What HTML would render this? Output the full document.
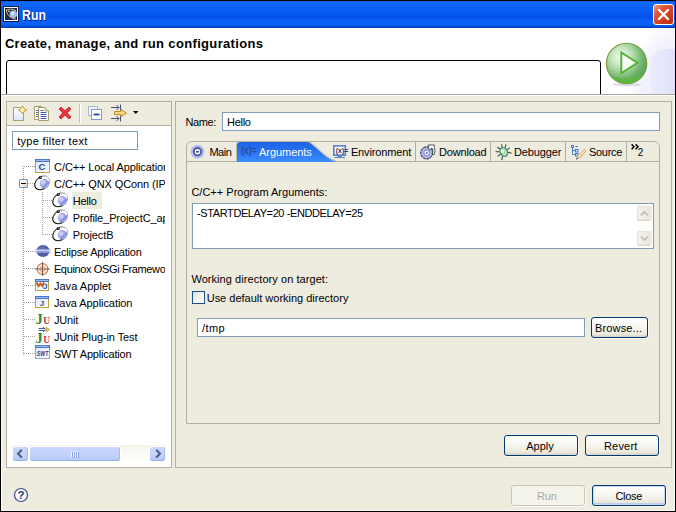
<!DOCTYPE html>
<html><head><meta charset="utf-8"><title>Run</title>
<style>
html,body{margin:0;padding:0;}
body{width:676px;height:512px;overflow:hidden;background:#eeebdf;position:relative;font-family:"Liberation Sans",sans-serif;font-size:11px;color:#000;}
.a{position:absolute;}
.t{position:absolute;white-space:nowrap;line-height:16px;height:16px;display:block;}
.fld{position:absolute;background:#fff;border:1px solid #7f9db9;box-sizing:border-box;}
.btn{position:absolute;box-sizing:border-box;box-shadow:1px 1px 0 rgba(255,255,255,0.7);border:1px solid #003c74;border-radius:3px;background:linear-gradient(to bottom,#ffffff 0%,#f6f5ef 50%,#ece9dc 85%,#d6d0c5 100%);}
.grp{position:absolute;box-sizing:border-box;border:1px solid #b4b09f;}
svg{position:absolute;overflow:visible;}
</style></head><body>
<!-- window frame -->
<div class="a" style="left:0;top:0;width:676px;height:512px;background:#000;"></div>
<div class="a" style="left:1px;top:28px;width:674px;height:483px;background:#eeebdf;box-sizing:border-box;border-left:1px solid #fbfaf4;border-right:1px solid #fbfaf4;border-bottom:1px solid #fbfaf4;"></div>
<!-- title bar -->
<div class="a" style="left:1px;top:1px;width:674px;height:27px;background:linear-gradient(to bottom,#0a54e2 0%,#146afa 5%,#1066f8 14%,#0a5ef4 32%,#0454ec 55%,#0350ea 62%,#085ef5 70%,#0a60f7 86%,#0756e8 92%,#0446ca 97%,#0336a2 100%);"></div>
<!--TITLEICON:BEGIN-->
<svg style="left:3px;top:6px" width="16" height="16" viewBox="0 0 16 16"><rect x="0.500" y="0.500" width="15" height="15" fill="#ffffff" stroke="#0c1c4c" stroke-width="1"/><rect x="2" y="2" width="12" height="12" fill="#15265c"/><circle cx="10.300" cy="8.300" r="3.700" fill="#a4bfe0"/><circle cx="9.600" cy="7.400" r="1.800" fill="#d4e2f2"/><path d="M3.500 3.500 C3 8 7 12.500 13 13 M4 4 C7 2.500 11 3 13 5" fill="none" stroke="#e6c85a" stroke-width="1"/><circle cx="6" cy="5.300" r="0.800" fill="#fff"/></svg>
<!--TITLEICON:END-->
<!-- close button -->
<div class="a" style="left:653px;top:4px;width:21px;height:21px;box-sizing:border-box;border:1px solid #fff;border-radius:3px;background:linear-gradient(135deg,#eb9a80 0%,#e0583a 30%,#cc3c1c 70%,#b83010 100%);"></div>
<svg style="left:653px;top:4px" width="21" height="21" viewBox="0 0 21 21"><path d="M6 6 L15 15 M15 6 L6 15" stroke="#fff" stroke-width="2.400" stroke-linecap="round" fill="none"/></svg>
<!-- header -->
<div class="a" style="left:1px;top:28px;width:674px;height:66px;background:#fff;overflow:hidden;">
  <div class="a" style="left:610px;top:0;width:64px;height:66px;background:radial-gradient(ellipse 46px 72px at 64px 66px,#eeeffc 0%,#f1f2fd 70%,#f8f8fe 88%,#ffffff 100%);"></div>
  <div class="a" style="left:650px;top:21px;width:24px;height:45px;border-top-left-radius:16px 14px;background:linear-gradient(to right,#eaebfc 0%,#e4e6fb 60%,#dee1fa 100%);"></div>
  <div class="a" style="left:5px;top:32px;width:595px;height:50px;box-sizing:border-box;border:1px solid #000;border-radius:3px;background:#fff;"></div>
</div>
<!--PLAY:BEGIN-->
<svg style="left:604px;top:41px" width="46" height="46" viewBox="0 0 46 46">
<defs>
<radialGradient id="pg" cx="0.36" cy="0.34" r="0.72"><stop offset="0" stop-color="#f2faee"/><stop offset="0.28" stop-color="#cfe9c6"/><stop offset="0.5" stop-color="#a3d39a"/><stop offset="0.75" stop-color="#6eb26c"/><stop offset="1" stop-color="#559f55"/></radialGradient>
<linearGradient id="tgw" x1="0" y1="0" x2="1" y2="1"><stop offset="0" stop-color="#ffffff"/><stop offset="1" stop-color="#eaf6e4"/></linearGradient>
</defs>
<ellipse cx="23" cy="43.600" rx="15" ry="1.600" fill="#d4d4e6" opacity="0.800"/>
<circle cx="22.600" cy="22.500" r="20.200" fill="url(#pg)" stroke="#76983e" stroke-width="1.100"/>
<path d="M5.500 33 A20 20 0 0 0 39.700 33 A22 13 0 0 1 5.500 33Z" fill="#5cb83c" opacity="0.900"/>
<path d="M17.300 11.500 L33.500 21.700 L17.300 32.300 Z" fill="url(#tgw)" stroke="#4fb033" stroke-width="1.900" stroke-linejoin="miter"/>
</svg>
<!--PLAY:END-->
<div class="a" style="left:1px;top:94px;width:674px;height:1px;background:#aca899;"></div>
<div class="a" style="left:1px;top:95px;width:674px;height:1px;background:#fff;"></div>

<!-- left panel -->
<div class="grp" style="left:6px;top:101px;width:166px;height:367px;background:#fff;"></div>
<div class="a" style="left:7px;top:102px;width:164px;height:23px;background:#eeebdf;"></div>
<div class="a" style="left:7px;top:125px;width:164px;height:1px;background:#b4b09f;"></div>
<!--TOOLBAR:BEGIN-->
<!-- new -->
<svg style="left:13px;top:105px" width="16" height="16" viewBox="0 0 16 16"><defs><linearGradient id="pgd" x1="0" y1="0" x2="0" y2="1"><stop offset="0" stop-color="#ffffff"/><stop offset="1" stop-color="#dfe6fb"/></linearGradient></defs><path d="M0.5 2.5 L7 2.5 L10.5 6 L10.5 15.5 L0.5 15.5 Z" fill="url(#pgd)" stroke="#a79d6a" stroke-width="1"/><path d="M9.5 1 L11 3.5 L13.5 5 L11 6.5 L9.5 9 L8 6.5 L5.5 5 L8 3.5 Z" fill="#fff7c8" stroke="#c49a1a" stroke-width="1"/></svg>
<!-- copy -->
<svg style="left:34px;top:105px" width="16" height="16" viewBox="0 0 16 16"><path d="M0.5 1.5 L7.5 1.5 L7.5 14.5 L0.5 14.5 Z" fill="#fff" stroke="#a79d6a"/><path d="M2 5.500h3M2 7.500h3M2 9.500h3M2 11.500h3" stroke="#4a6fc0" stroke-width="1"/><path d="M4.5 2.500 L11 2.5 L14.5 6 L14.5 15.500 L4.500 15.500 Z" fill="#fff" stroke="#a79d6a"/><path d="M11 2.5 L11 6 L14.5 6" fill="#f1d9a0" stroke="#a79d6a" stroke-width="0.8"/><path d="M6.500 5.500h3M6.500 7.500h6M6.500 9.500h6M6.500 11.500h6M6.500 13.500h6" stroke="#3b5fb5" stroke-width="1"/></svg>
<!-- delete -->
<svg style="left:58px;top:106px" width="14" height="14" viewBox="0 0 14 14"><path d="M1 3 L3 1 L7 4.8 L11 1 L13 3 L9.200 7 L13 11 L11 13 L7 9.200 L3 13 L1 11 L4.800 7 Z" fill="#e8343a" stroke="#c51f2a" stroke-width="0.8" stroke-linejoin="round"/></svg>
<div class="a" style="left:79px;top:104px;width:1px;height:19px;background:#c5c2b2;"></div>
<div class="a" style="left:80px;top:104px;width:1px;height:19px;background:#fff;"></div>
<!-- collapse all -->
<svg style="left:88px;top:106px" width="14" height="14" viewBox="0 0 14 14"><rect x="0.500" y="0.500" width="9" height="9" fill="#f4f6fb" stroke="#a9b8d8"/><rect x="3.500" y="3.500" width="10" height="10" fill="#fff" stroke="#7f9bd6" stroke-width="1"/><rect x="5.500" y="7.600" width="6" height="1.800" fill="#2a4c9c"/></svg>
<!-- filter -->
<svg style="left:110px;top:104px" width="18" height="18" viewBox="0 0 18 18"><path d="M1 3.500 H9 M6.500 1 L9 3.500 L6.500 6 M10.500 0.500 V6.500" stroke="#44507a" stroke-width="1" fill="none"/><path d="M1 14.500 H9 M6.500 12 L9 14.500 L6.500 17 M10.500 11.500 V17.500" stroke="#44507a" stroke-width="1" fill="none"/><path d="M4.500 7.500 H11 V5.500 L16.500 9 L11 12.500 V10.500 H4.500 Z" fill="#f8d98a" stroke="#c08a1e" stroke-width="1" stroke-linejoin="round"/></svg>
<svg style="left:133px;top:111px" width="6" height="4" viewBox="0 0 6 4"><path d="M0 0 H5.500 L2.750 3 Z" fill="#000"/></svg>
<!--TOOLBAR:END-->
<div class="fld" style="left:12px;top:131px;width:126px;height:19px;"></div>
<!--TREE:BEGIN-->
<div class="a" style="left:12px;top:156px;width:154px;height:292px;overflow:hidden;">
<div class="a" style="left:-12px;top:-156px;width:200px;height:500px;">
<div class="a" style="left:72px;top:192px;width:30px;height:17px;background:#eeebdf;"></div>
<svg style="left:23px;top:166px" width="1" height="189" viewBox="0 0 1 189"><path d="M0.5 0 V189" stroke="#a9a797" stroke-width="1" stroke-dasharray="1 1" shape-rendering="crispEdges"/></svg>
<svg style="left:24px;top:166px" width="11" height="1" viewBox="0 0 11 1"><path d="M0 0.5 H11" stroke="#a9a797" stroke-width="1" stroke-dasharray="1 1" shape-rendering="crispEdges"/></svg>
<svg style="left:28px;top:183px" width="7" height="1" viewBox="0 0 7 1"><path d="M0 0.5 H7" stroke="#a9a797" stroke-width="1" stroke-dasharray="1 1" shape-rendering="crispEdges"/></svg>
<svg style="left:24px;top:251px" width="11" height="1" viewBox="0 0 11 1"><path d="M0 0.5 H11" stroke="#a9a797" stroke-width="1" stroke-dasharray="1 1" shape-rendering="crispEdges"/></svg>
<svg style="left:24px;top:268px" width="11" height="1" viewBox="0 0 11 1"><path d="M0 0.5 H11" stroke="#a9a797" stroke-width="1" stroke-dasharray="1 1" shape-rendering="crispEdges"/></svg>
<svg style="left:24px;top:285px" width="11" height="1" viewBox="0 0 11 1"><path d="M0 0.5 H11" stroke="#a9a797" stroke-width="1" stroke-dasharray="1 1" shape-rendering="crispEdges"/></svg>
<svg style="left:24px;top:302px" width="11" height="1" viewBox="0 0 11 1"><path d="M0 0.5 H11" stroke="#a9a797" stroke-width="1" stroke-dasharray="1 1" shape-rendering="crispEdges"/></svg>
<svg style="left:24px;top:319px" width="11" height="1" viewBox="0 0 11 1"><path d="M0 0.5 H11" stroke="#a9a797" stroke-width="1" stroke-dasharray="1 1" shape-rendering="crispEdges"/></svg>
<svg style="left:24px;top:336px" width="11" height="1" viewBox="0 0 11 1"><path d="M0 0.5 H11" stroke="#a9a797" stroke-width="1" stroke-dasharray="1 1" shape-rendering="crispEdges"/></svg>
<svg style="left:24px;top:353px" width="11" height="1" viewBox="0 0 11 1"><path d="M0 0.5 H11" stroke="#a9a797" stroke-width="1" stroke-dasharray="1 1" shape-rendering="crispEdges"/></svg>
<svg style="left:42px;top:192px" width="1" height="44" viewBox="0 0 1 44"><path d="M0.5 0 V44" stroke="#a9a797" stroke-width="1" stroke-dasharray="1 1" shape-rendering="crispEdges"/></svg>
<svg style="left:43px;top:200px" width="10" height="1" viewBox="0 0 10 1"><path d="M0 0.5 H10" stroke="#a9a797" stroke-width="1" stroke-dasharray="1 1" shape-rendering="crispEdges"/></svg>
<svg style="left:43px;top:217px" width="10" height="1" viewBox="0 0 10 1"><path d="M0 0.5 H10" stroke="#a9a797" stroke-width="1" stroke-dasharray="1 1" shape-rendering="crispEdges"/></svg>
<svg style="left:43px;top:234px" width="10" height="1" viewBox="0 0 10 1"><path d="M0 0.5 H10" stroke="#a9a797" stroke-width="1" stroke-dasharray="1 1" shape-rendering="crispEdges"/></svg>
<div class="a" style="left:19px;top:179px;width:9px;height:9px;box-sizing:border-box;border:1px solid #7898b5;border-radius:1px;background:linear-gradient(135deg,#fff 30%,#d8d4c4 100%);"></div><div class="a" style="left:21px;top:183px;width:5px;height:1px;background:#000;"></div>
<svg style="left:35px;top:159px" width="15" height="14" viewBox="0 0 15 14"><defs><linearGradient id="wg" x1="0" y1="0" x2="1" y2="1"><stop offset="0" stop-color="#d8e8fb"/><stop offset="1" stop-color="#ffffff"/></linearGradient></defs><rect x="0.5" y="0.5" width="14" height="13" fill="url(#wg)" stroke="#c4a043"/><rect x="0" y="0" width="15" height="3" fill="#4a78c8"/><rect x="1" y="1" width="13" height="1" fill="#9fbdec"/><text x="3.6" y="11.300" font-family="Liberation Sans, sans-serif" font-weight="bold" font-size="9.500" fill="#26498c">C</text></svg>
<svg style="left:34px;top:175px" width="17" height="16" viewBox="0 0 17 16"><defs><linearGradient id="qg" x1="0" y1="0" x2="1" y2="0"><stop offset="0" stop-color="#000"/><stop offset="0.45" stop-color="#333"/><stop offset="1" stop-color="#c8c8c8"/></linearGradient></defs><ellipse cx="8.200" cy="7.800" rx="8.200" ry="6" transform="rotate(-38 8.200 7.800)" fill="#fff" stroke="url(#qg)" stroke-width="1.100"/><circle cx="10.500" cy="8.800" r="4.700" fill="#a4a8e6"/><circle cx="9.300" cy="7.600" r="2.400" fill="#c9ccf3"/><path d="M14.300 6 L7.500 12.600 L9 13.400 L15.200 8 Z" fill="#8288d6" opacity="0.700"/><circle cx="6.300" cy="2.500" r="1.600" fill="#111"/><circle cx="6.600" cy="2.300" r="0.500" fill="#fff"/></svg>
<svg style="left:52px;top:192px" width="17" height="16" viewBox="0 0 17 16"><defs><linearGradient id="qg" x1="0" y1="0" x2="1" y2="0"><stop offset="0" stop-color="#000"/><stop offset="0.45" stop-color="#333"/><stop offset="1" stop-color="#c8c8c8"/></linearGradient></defs><ellipse cx="8.200" cy="7.800" rx="8.200" ry="6" transform="rotate(-38 8.200 7.800)" fill="#fff" stroke="url(#qg)" stroke-width="1.100"/><circle cx="10.500" cy="8.800" r="4.700" fill="#a4a8e6"/><circle cx="9.300" cy="7.600" r="2.400" fill="#c9ccf3"/><path d="M14.300 6 L7.500 12.600 L9 13.400 L15.200 8 Z" fill="#8288d6" opacity="0.700"/><circle cx="6.300" cy="2.500" r="1.600" fill="#111"/><circle cx="6.600" cy="2.300" r="0.500" fill="#fff"/></svg>
<svg style="left:52px;top:209px" width="17" height="16" viewBox="0 0 17 16"><defs><linearGradient id="qg" x1="0" y1="0" x2="1" y2="0"><stop offset="0" stop-color="#000"/><stop offset="0.45" stop-color="#333"/><stop offset="1" stop-color="#c8c8c8"/></linearGradient></defs><ellipse cx="8.200" cy="7.800" rx="8.200" ry="6" transform="rotate(-38 8.200 7.800)" fill="#fff" stroke="url(#qg)" stroke-width="1.100"/><circle cx="10.500" cy="8.800" r="4.700" fill="#a4a8e6"/><circle cx="9.300" cy="7.600" r="2.400" fill="#c9ccf3"/><path d="M14.300 6 L7.500 12.600 L9 13.400 L15.200 8 Z" fill="#8288d6" opacity="0.700"/><circle cx="6.300" cy="2.500" r="1.600" fill="#111"/><circle cx="6.600" cy="2.300" r="0.500" fill="#fff"/></svg>
<svg style="left:52px;top:226px" width="17" height="16" viewBox="0 0 17 16"><defs><linearGradient id="qg" x1="0" y1="0" x2="1" y2="0"><stop offset="0" stop-color="#000"/><stop offset="0.45" stop-color="#333"/><stop offset="1" stop-color="#c8c8c8"/></linearGradient></defs><ellipse cx="8.200" cy="7.800" rx="8.200" ry="6" transform="rotate(-38 8.200 7.800)" fill="#fff" stroke="url(#qg)" stroke-width="1.100"/><circle cx="10.500" cy="8.800" r="4.700" fill="#a4a8e6"/><circle cx="9.300" cy="7.600" r="2.400" fill="#c9ccf3"/><path d="M14.300 6 L7.500 12.600 L9 13.400 L15.200 8 Z" fill="#8288d6" opacity="0.700"/><circle cx="6.300" cy="2.500" r="1.600" fill="#111"/><circle cx="6.600" cy="2.300" r="0.500" fill="#fff"/></svg>
<svg style="left:35px;top:244px" width="16" height="14" viewBox="0 0 16 14"><ellipse cx="8" cy="7" rx="6.600" ry="6" fill="#565ea4"/><ellipse cx="7" cy="4.500" rx="3.500" ry="2.200" fill="#646cb2"/><rect x="0.500" y="5" width="15" height="1" fill="#8fa8e8"/><rect x="0" y="6.200" width="16" height="1.300" fill="#dfe8ff"/><rect x="0.500" y="7.800" width="15" height="1" fill="#8fa8e8"/></svg>
<svg style="left:35px;top:262px" width="16" height="14" viewBox="0 0 16 14"><circle cx="7.500" cy="7" r="5.400" fill="#fdf0dc" stroke="#d8704a" stroke-width="1.100"/><circle cx="7.500" cy="7" r="2.600" fill="none" stroke="#e0906a" stroke-width="0.900"/><path d="M7.500 0 V14 M0 7 H15" stroke="#5a3a30" stroke-width="0.800"/></svg>
<svg style="left:35px;top:279px" width="14" height="12" viewBox="0 0 14 12"><rect x="0.500" y="0.500" width="13" height="11" fill="url(#wg)" stroke="#c4a043"/><rect x="0" y="0" width="14" height="3" fill="#4a78c8"/><rect x="1" y="1" width="12" height="1" fill="#9fbdec"/><path d="M1.500 3.500 L3.500 7 L5.500 4.500 L7.500 7 L9 3.500" stroke="#c8601a" stroke-width="2" fill="none"/><text x="8" y="10.300" font-family="Liberation Sans, sans-serif" font-weight="bold" font-size="8" fill="#2a52a0">J</text></svg>
<svg style="left:35px;top:296px" width="14" height="12" viewBox="0 0 14 12"><rect x="0.500" y="0.500" width="13" height="11" fill="url(#wg)" stroke="#c4a043"/><rect x="0" y="0" width="14" height="3" fill="#4a78c8"/><rect x="1" y="1" width="12" height="1" fill="#9fbdec"/><text x="4.800" y="10.300" font-family="Liberation Sans, sans-serif" font-weight="bold" font-size="8" fill="#2a52a0">J</text></svg>
<svg style="left:35px;top:309px" width="17" height="20" viewBox="0 0 17 20"><text x="0.500" y="15" font-family="Liberation Serif, serif" font-weight="bold" font-size="14.500" fill="#2a8a3a">J</text><text x="8.300" y="15" font-family="Liberation Serif, serif" font-weight="bold" font-size="9.500" fill="#d8303a">U</text></svg>
<svg style="left:35px;top:326px" width="17" height="20" viewBox="0 0 17 20"><text x="0.500" y="17" font-family="Liberation Serif, serif" font-weight="bold" font-size="14.500" fill="#2a8a3a">J</text><text x="8.300" y="17" font-family="Liberation Serif, serif" font-weight="bold" font-size="9.500" fill="#d8303a">U</text><path d="M3.500 2.500 H9.500 M3.500 4.500 H9.500 M8 1 L10.500 3.500 L8 6" stroke="#3b5fb5" stroke-width="1" fill="none"/><path d="M11 1.300 L14.500 3.500 L11 5.700 Z" fill="#f6d27a" stroke="#c08a1e" stroke-width="0.800"/></svg>
<svg style="left:35px;top:345px" width="15" height="14" viewBox="0 0 15 14"><rect x="0.500" y="0.500" width="14" height="13" fill="url(#wg)" stroke="#9aa6c8"/><rect x="0" y="0" width="15" height="3" fill="#4a78c8"/><rect x="1" y="1" width="13" height="1" fill="#9fbdec"/><text x="1.800" y="10.800" font-family="Liberation Sans, sans-serif" font-weight="bold" font-style="italic" font-size="6.500" fill="#1d3c8a" textLength="11.500" lengthAdjust="spacingAndGlyphs">SWT</text></svg>
</div></div>
<!--TREE:END-->
<!--HSCROLL:BEGIN-->
<!-- horizontal scrollbar -->
<div class="a" style="left:12px;top:445px;width:154px;height:17px;background:linear-gradient(to bottom,#f1f0ea 0%,#f9f8f4 25%,#fefefc 100%);"></div>
<div class="a" style="left:12px;top:446px;width:17px;height:16px;box-sizing:border-box;border:1px solid #fff;border-radius:3px;background:linear-gradient(to bottom,#cad7fb 0%,#c3d2fa 60%,#b3c5f3 100%);box-shadow:inset 0 -1px 0 #98b0e6,inset -1px 0 0 #a8bcec;"></div>
<svg style="left:16px;top:449px" width="8" height="10" viewBox="0 0 8 10"><path d="M5.800 0.800 L2 4.700 L5.800 8.600" stroke="#4d6185" stroke-width="2.100" fill="none"/></svg>
<div class="a" style="left:29px;top:446px;width:92px;height:16px;box-sizing:border-box;border:1px solid #fff;border-radius:3px;background:linear-gradient(to bottom,#cad7fb 0%,#c3d2fa 55%,#b6c8f5 100%);box-shadow:inset 0 -1px 0 #98b0e6,inset -1px 0 0 #a8bcec;"></div>
<div class="a" style="left:71px;top:451px;width:1px;height:6px;background:#eef3ff;"></div><div class="a" style="left:73px;top:451px;width:1px;height:6px;background:#eef3ff;"></div><div class="a" style="left:75px;top:451px;width:1px;height:6px;background:#eef3ff;"></div><div class="a" style="left:77px;top:451px;width:1px;height:6px;background:#eef3ff;"></div>
<div class="a" style="left:72px;top:452px;width:1px;height:6px;background:#8ca5dd;"></div><div class="a" style="left:74px;top:452px;width:1px;height:6px;background:#8ca5dd;"></div><div class="a" style="left:76px;top:452px;width:1px;height:6px;background:#8ca5dd;"></div><div class="a" style="left:78px;top:452px;width:1px;height:6px;background:#8ca5dd;"></div>
<div class="a" style="left:149px;top:446px;width:17px;height:16px;box-sizing:border-box;border:1px solid #fff;border-radius:3px;background:linear-gradient(to bottom,#cad7fb 0%,#c3d2fa 60%,#b3c5f3 100%);box-shadow:inset 0 -1px 0 #98b0e6,inset -1px 0 0 #a8bcec;"></div>
<svg style="left:154px;top:449px" width="8" height="10" viewBox="0 0 8 10"><path d="M2.200 0.800 L6 4.700 L2.200 8.600" stroke="#4d6185" stroke-width="2.100" fill="none"/></svg>
<!--HSCROLL:END-->

<!-- right panel -->
<div class="grp" style="left:175px;top:101px;width:497px;height:367px;"></div>
<div class="fld" style="left:222px;top:112px;width:438px;height:19px;"></div>
<!--TABS:BEGIN-->
<!-- tab folder -->
<div class="a" style="left:186px;top:141px;width:474px;height:283px;box-sizing:border-box;border:1px solid #b2ae9f;border-radius:6px 6px 0 0;"></div>
<div class="a" style="left:187px;top:161px;width:472px;height:1px;background:#b2ae9f;"></div>
<div class="a" style="left:415px;top:142px;width:1px;height:19px;background:#b2ae9f;"></div>
<div class="a" style="left:490px;top:142px;width:1px;height:19px;background:#b2ae9f;"></div>
<div class="a" style="left:565px;top:142px;width:1px;height:19px;background:#b2ae9f;"></div>
<div class="a" style="left:626px;top:142px;width:1px;height:19px;background:#b2ae9f;"></div>
<!-- selected tab -->
<svg style="left:236px;top:141px" width="102" height="22" viewBox="0 0 102 22">
<defs><linearGradient id="tg" x1="0" y1="0" x2="0" y2="1"><stop offset="0" stop-color="#1d62e6"/><stop offset="0.450" stop-color="#2873f2"/><stop offset="1" stop-color="#3d8efe"/></linearGradient></defs>
<path d="M1 21 L1 4 Q1 1 4 1 L69 1 C72 1 73.500 1.300 75.500 3 L87 13 C91 16.500 95 19 100.500 21 Z" fill="url(#tg)"/>
<path d="M0.500 21 L0.500 4 Q0.500 0.500 4 0.500 L69 0.500 C72.500 0.500 74 0.800 76 2.500 L87.500 12.500 C91.500 16 95.500 18.500 101 20.500" fill="none" stroke="#b2ae9f" stroke-width="1" stroke-opacity="0.800"/>
</svg>
<!-- Main icon -->
<svg style="left:190px;top:144px" width="16" height="16" viewBox="0 0 16 16"><circle cx="7.500" cy="7.700" r="7" fill="#b6bdf3"/><circle cx="7.500" cy="7.700" r="4.700" fill="#505a9e"/><circle cx="7.500" cy="7.700" r="2.700" fill="#fff"/><rect x="6" y="6.900" width="3" height="1.700" fill="#4a5496"/></svg>
<!-- Arguments icon (x)= -->
<svg style="left:241px;top:144px" width="16" height="16" viewBox="0 0 16 16"><text x="0" y="10.300" font-family="Liberation Sans, sans-serif" font-size="10" font-weight="bold" fill="#27324e" fill-opacity="0.620" textLength="15.500" lengthAdjust="spacingAndGlyphs">(x)=</text></svg>
<!-- Environment icon -->
<svg style="left:333px;top:144px" width="16" height="16" viewBox="0 0 16 16"><rect x="0.800" y="1.800" width="11.500" height="9.400" fill="#f2f6ff" stroke="#5b80cc" stroke-width="1.600"/><rect x="4.500" y="12" width="4" height="1" fill="#5b80cc"/><rect x="1.500" y="13" width="10.500" height="1" fill="#5b80cc"/><text x="2.800" y="9.300" font-family="Liberation Sans, sans-serif" font-size="7" font-weight="bold" fill="#1e3560" textLength="12.500" lengthAdjust="spacingAndGlyphs">(x)=</text></svg>
<!-- Download icon -->
<svg style="left:420px;top:144px" width="17" height="17" viewBox="0 0 17 17"><circle cx="6.700" cy="8.900" r="6.100" fill="#9298d6" stroke="#1e2040" stroke-width="1" stroke-dasharray="2.500 1"/><circle cx="6.700" cy="8.900" r="4.300" fill="none" stroke="#b9bdec" stroke-width="1.400"/><circle cx="6.700" cy="8.900" r="2.200" fill="#f4f4ff"/><circle cx="6.700" cy="8.900" r="0.900" fill="#5a60b0"/><path d="M8.300 1 H14.300 V3.600 Q16.200 7.500 13.800 11 L12.300 9.800 Q13.800 6.800 12 4 L10.500 5.800 L8.300 4.500 Z" fill="#fff" stroke="#1c3030" stroke-width="0.800" stroke-linejoin="round"/></svg>
<!-- Debugger icon -->
<svg style="left:496px;top:144px" width="16" height="16" viewBox="0 0 16 16"><g transform="rotate(-35 7.800 8)"><g stroke="#1c4a2c" stroke-width="1" fill="none"><path d="M4.500 5.500 L1.200 3 M4 8 L0.300 8 M4.500 10.500 L1.500 13.500 M11 5.500 L14 3 M11.500 8 L15 8 M11 10.500 L13.500 13.500 M6.500 3.800 L5.500 0.300 M9 3.800 L10.300 0.500"/></g><ellipse cx="7.800" cy="8" rx="3.500" ry="4.600" fill="#b2e0a2" stroke="#2f6f96" stroke-width="1"/><ellipse cx="7.300" cy="6.500" rx="1.500" ry="1.800" fill="#e6f7de"/></g></svg>
<!-- Source icon -->
<svg style="left:571px;top:144px" width="17" height="17" viewBox="0 0 17 17"><path d="M1.500 4 V10.500 H4 M1.500 6.500 H4 M4.500 2.500 H7" stroke="#4a78c8" stroke-width="1" fill="none"/><g fill="#dfe9fb" stroke="#4a78c8" stroke-width="1"><rect x="0.500" y="1.500" width="2" height="2"/><rect x="4.500" y="5.500" width="2.500" height="2.500"/><rect x="4.500" y="9.500" width="2.500" height="2.500"/></g><path d="M6.300 12.300 L13.300 5.500 L15 7.200 L8.200 14.200 Z" fill="#f9e2ac" stroke="#dca25a" stroke-width="0.700"/><path d="M13.300 5.500 L15 7.200 L8.200 14.200" fill="none" stroke="#d86a5a" stroke-width="0.700" stroke-dasharray="1 1"/><path d="M5 15.500 L6.300 12.300 L8.200 14.200 Z" fill="#d8c79a"/><path d="M5 15.500 L5.800 13.600 L6.900 14.700 Z" fill="#10204a"/></svg>
<!-- chevron >> -->
<svg style="left:631px;top:143.500px" width="9" height="6" viewBox="0 0 9 6"><path d="M0.600 0.400 L3 2.800 L0.600 5.200 M4.600 0.400 L7 2.800 L4.600 5.200" stroke="#000" stroke-width="1.500" fill="none"/></svg>
<!--TABS:END-->
<!-- textarea -->
<div class="fld" style="left:192px;top:203px;width:462px;height:46px;"></div>
<!--VSCROLL:BEGIN-->
<div class="a" style="left:636px;top:204px;width:17px;height:44px;background:#fdfdfb;"></div>
<div class="a" style="left:637px;top:206px;width:14px;height:14px;box-sizing:border-box;border:1px solid #e6e4da;border-radius:2px;background:linear-gradient(to right,#f3f2ec 0%,#eae8df 100%);box-shadow:0 1px 0 #d8d5c8,1px 0 0 #f0eee6;"></div>
<svg style="left:639.500px;top:209.500px" width="9" height="7" viewBox="0 0 9 7"><path d="M0.800 5.300 L4.500 1.800 L8.200 5.300" stroke="#c4c2b6" stroke-width="1.800" fill="none"/></svg>
<div class="a" style="left:637px;top:231px;width:14px;height:14px;box-sizing:border-box;border:1px solid #e6e4da;border-radius:2px;background:linear-gradient(to right,#f3f2ec 0%,#eae8df 100%);box-shadow:0 1px 0 #d8d5c8,1px 0 0 #f0eee6;"></div>
<svg style="left:639.500px;top:235px" width="9" height="7" viewBox="0 0 9 7"><path d="M0.800 1.500 L4.500 5 L8.200 1.500" stroke="#c4c2b6" stroke-width="1.800" fill="none"/></svg>
<!--VSCROLL:END-->
<!-- checkbox -->
<div class="a" style="left:192px;top:291px;width:13px;height:13px;box-sizing:border-box;border:1px solid #1c5180;background:linear-gradient(135deg,#dcdcd7 0%,#f3f3ef 50%,#ffffff 100%);"></div>
<div class="fld" style="left:197px;top:318px;width:388px;height:19px;"></div>
<div class="btn" style="left:591px;top:317px;width:57px;height:21px;"></div>
<div class="btn" style="left:504px;top:435px;width:74px;height:21px;"></div>
<div class="btn" style="left:585px;top:435px;width:74px;height:21px;"></div>
<div class="btn" style="left:511px;top:485px;width:74px;height:21px;border-color:#c9c7ba;background:#f5f4ea;"></div>
<div class="btn" style="left:592px;top:485px;width:74px;height:21px;box-shadow:inset 0 0 0 1px #cbd8f4,inset 0 -2px 0 #bccdf0,1px 1px 0 rgba(255,255,255,0.7);"></div>
<!--HELP:BEGIN-->
<svg style="left:13px;top:487px" width="16" height="16" viewBox="0 0 16 16"><circle cx="8" cy="8" r="6.500" fill="#fdfdff" stroke="#3a4a86" stroke-width="1.200"/><text x="8" y="12" text-anchor="middle" font-family="Liberation Sans, sans-serif" font-weight="bold" font-size="11.500" fill="#2c3a78">?</text></svg>
<!--HELP:END-->
<span class="t" id="ttl" style="left:21.9px;top:7px;font-size:14px;transform-origin:0 0;transform:scaleX(0.8817);font-weight:bold;color:#fff;text-shadow:1px 1px 0 #0a1883;">Run</span>
<span class="t" id="hdr" style="left:4.9px;top:36px;font-size:13px;letter-spacing:0.339px;font-weight:bold;">Create, manage, and run configurations</span>
<span class="t" id="name" style="left:185.4px;top:114px;font-size:11px;letter-spacing:-0.401px;">Name:</span>
<span class="t" id="hello" style="left:227.0px;top:114px;font-size:11px;letter-spacing:-0.276px;">Hello</span>
<span class="t" id="tmain" style="left:209.4px;top:144px;font-size:11px;letter-spacing:-0.461px;">Main</span>
<span class="t" id="targ" style="left:259.1px;top:144px;font-size:11px;letter-spacing:-0.067px;color:#fff;">Arguments</span>
<span class="t" id="tenv" style="left:350.9px;top:144px;font-size:11px;letter-spacing:-0.133px;">Environment</span>
<span class="t" id="tdl" style="left:439.1px;top:144px;font-size:11px;letter-spacing:-0.203px;">Download</span>
<span class="t" id="tdbg" style="left:513.9px;top:144px;font-size:11px;letter-spacing:-0.104px;">Debugger</span>
<span class="t" id="tsrc" style="left:589.0px;top:144px;font-size:11px;letter-spacing:-0.293px;">Source</span>
<span class="t" id="ttwo" style="left:637.7px;top:144.5px;font-size:10px;letter-spacing:0.738px;">2</span>
<span class="t" id="lpa" style="left:191.4px;top:184px;font-size:11px;letter-spacing:0.011px;">C/C++ Program Arguments:</span>
<span class="t" id="args" style="left:197.1px;top:205px;font-size:11px;letter-spacing:-0.403px;">-STARTDELAY=20 -ENDDELAY=25</span>
<span class="t" id="wd" style="left:191.4px;top:271px;font-size:11px;letter-spacing:0.064px;">Working directory on target:</span>
<span class="t" id="usedef" style="left:206.7px;top:290px;font-size:11px;letter-spacing:-0.005px;">Use default working directory</span>
<span class="t" id="tmp" style="left:202.1px;top:320px;font-size:11px;letter-spacing:0.373px;">/tmp</span>
<span class="t" id="browse" style="left:595.0px;top:320px;font-size:11px;letter-spacing:0.149px;">Browse...</span>
<span class="t" id="apply" style="left:526.2px;top:438px;font-size:11px;letter-spacing:-0.006px;">Apply</span>
<span class="t" id="revert" style="left:603.9px;top:438px;font-size:11px;letter-spacing:0.216px;">Revert</span>
<span class="t" id="run" style="left:536.9px;top:488px;font-size:11px;letter-spacing:-0.096px;color:#aca899;">Run</span>
<span class="t" id="close" style="left:615.4px;top:488px;font-size:11px;letter-spacing:-0.265px;">Close</span>
<span class="t" id="filter" style="left:17.2px;top:133px;font-size:11px;letter-spacing:0.311px;">type filter text</span>
<span class="t" id="tr0" style="left:54.1px;top:159px;font-size:11px;letter-spacing:-0.106px;width:111.3px;overflow:hidden;">C/C++ Local Application</span>
<span class="t" id="tr1" style="left:54.1px;top:176px;font-size:11px;letter-spacing:-0.106px;width:111.3px;overflow:hidden;">C/C++ QNX QConn (IP)</span>
<span class="t" id="tr2" style="left:72.7px;top:193px;font-size:11px;letter-spacing:-0.216px;">Hello</span>
<span class="t" id="tr3" style="left:72.7px;top:210px;font-size:11px;letter-spacing:-0.106px;width:92.7px;overflow:hidden;">Profile_ProjectC_app</span>
<span class="t" id="tr4" style="left:72.7px;top:227px;font-size:11px;letter-spacing:-0.110px;">ProjectB</span>
<span class="t" id="tr5" style="left:53.9px;top:244px;font-size:11px;letter-spacing:-0.207px;">Eclipse Application</span>
<span class="t" id="tr6" style="left:53.9px;top:261px;font-size:11px;letter-spacing:-0.355px;width:111.5px;overflow:hidden;">Equinox OSGi Framework</span>
<span class="t" id="tr7" style="left:53.9px;top:278px;font-size:11px;letter-spacing:0.039px;">Java Applet</span>
<span class="t" id="tr8" style="left:53.9px;top:295px;font-size:11px;letter-spacing:-0.062px;">Java Application</span>
<span class="t" id="tr9" style="left:53.9px;top:312px;font-size:11px;letter-spacing:-0.172px;">JUnit</span>
<span class="t" id="tr10" style="left:53.9px;top:329px;font-size:11px;letter-spacing:-0.105px;">JUnit Plug-in Test</span>
<span class="t" id="tr11" style="left:53.9px;top:346px;font-size:11px;letter-spacing:-0.201px;">SWT Application</span>
</body></html>
